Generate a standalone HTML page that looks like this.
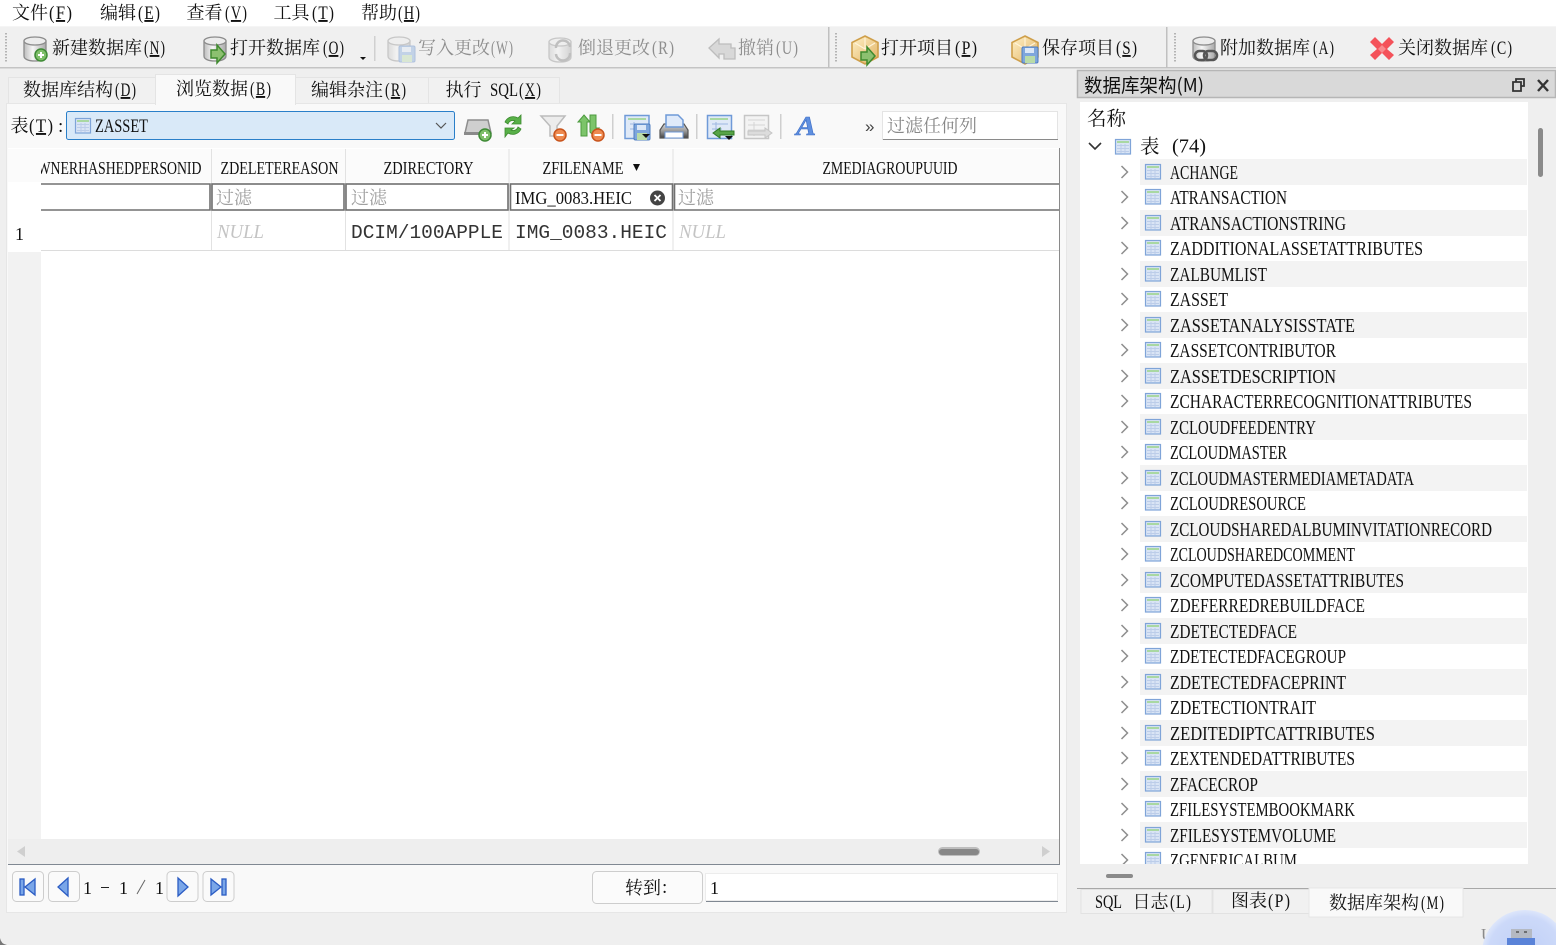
<!DOCTYPE html>
<html><head><meta charset="utf-8"><title>DB Browser</title>
<style>
html,body{margin:0;padding:0;background:#efefef;width:1556px;height:945px;overflow:hidden}
svg{display:block;position:absolute;left:0;top:0}
.c{font-family:"Noto Serif CJK SC","Liberation Serif",serif;font-size:18px;fill:#111}
.l{font-family:"Liberation Serif","Noto Serif CJK SC",serif;font-size:19px;fill:#111}
.t{font-family:"Liberation Serif",serif;font-size:20px;fill:#111}
.m{font-family:"Liberation Mono",monospace;font-size:19.5px;fill:#333}
.g{fill:#8e8e8e}
.f{fill:#a0a0a0}
.n{font-family:"Liberation Serif",serif;font-style:italic;font-size:20px;fill:#c4c4c4}
.u{text-decoration:underline}
</style></head><body>
<svg width="1556" height="945" viewBox="0 0 1556 945" xmlns="http://www.w3.org/2000/svg">
<defs>
<linearGradient id="cyl" x1="0" x2="1" y1="0" y2="0"><stop offset="0" stop-color="#bdbdbd"/><stop offset=".4" stop-color="#f6f6f6"/><stop offset="1" stop-color="#a8a8a8"/></linearGradient>
<linearGradient id="box" x1="0" x2="1" y1="0" y2="1"><stop offset="0" stop-color="#fff1c8"/><stop offset="1" stop-color="#e0b060"/></linearGradient>
<linearGradient id="prn" x1="0" x2="0" y1="0" y2="1"><stop offset="0" stop-color="#d8d8d8"/><stop offset=".5" stop-color="#9a9a9a"/><stop offset="1" stop-color="#444"/></linearGradient>
<radialGradient id="usb" gradientUnits="userSpaceOnUse" cx="1525" cy="953" r="43"><stop offset="0" stop-color="#bfcff6"/><stop offset=".85" stop-color="#ccd9f9"/><stop offset="1" stop-color="#dde6fb"/></radialGradient>
<clipPath id="treeclip"><rect x="1080" y="102" width="448" height="762"/></clipPath>
<clipPath id="hdrclip"><rect x="41" y="148" width="170" height="34"/></clipPath>

<g id="tbl">
<rect x=".5" y=".5" width="15" height="14.500" fill="#d9e4f5" stroke="#7fa4d8" stroke-width="1.200"/>
<rect x="2" y="2" width="12" height="2" fill="#a9d8a2"/>
<path d="M2 6.500H14M2 9.500H14M2 12.500H14M6 5V14M10 5V14" stroke="#bccde9" fill="none"/>
</g>
<g id="row">
<path d="M1121.500-6L1127.500 0L1121.500 6" fill="none" stroke="#8e8e8e" stroke-width="1.500"/>
<use href="#tbl" x="1145" y="-8"/>
</g>
<g id="cy">
<path d="M1 5V20C1 23 5 25 12 25C19 25 23 23 23 20V5Z" fill="url(#cyl)" stroke="#8c8c8c" stroke-width="1.300"/>
<ellipse cx="12" cy="5" rx="11" ry="4" fill="#ececec" stroke="#8c8c8c" stroke-width="1.300"/>
</g>
<g id="plus">
<circle cx="0" cy="0" r="6" fill="#7fbf6a" stroke="#3e8a35" stroke-width="1.500"/>
<path d="M-3 0H3M0-3V3" stroke="#fff" stroke-width="2"/>
</g>
<g id="minus">
<circle cx="0" cy="0" r="6" fill="#ee8a50" stroke="#c8541c" stroke-width="1.500"/>
<path d="M-3.500 0H3.500" stroke="#fff" stroke-width="2"/>
</g>
<g id="arrow">
<path d="M0-4H6V-9L14 0L6 9V4H0Z" fill="#8cc070" stroke="#3f8a2e" stroke-width="1.500"/>
</g>
<g id="hex">
<path d="M14 1L27 7.500V22L14 29L1 22V7.500Z" fill="url(#box)" stroke="#cf9f4a" stroke-width="1.600"/>
<path d="M14 3L14 14L4 8M14 14L24 8" fill="none" stroke="#fff3d8" stroke-width="1.200"/>
</g>
<g id="floppy">
<rect x="0" y="0" width="16" height="16" rx="1.500" fill="#7ea6dc" stroke="#4f7dc0"/>
<rect x="3" y="1" width="9" height="5" fill="#dbe7f7"/>
<rect x="3" y="9" width="10" height="7" fill="#b9dba8"/>
</g>
<g id="navbtn"><rect x=".5" y=".5" width="31" height="30" rx="4" fill="#fafafa" stroke="#cdcdcd"/></g>
</defs>

<!-- backgrounds -->
<rect width="1556" height="945" fill="#efefef"/>
<rect width="1556" height="26" fill="#fff"/>
<rect y="26" width="1556" height="1" fill="#f5f5f5"/>
<rect y="27" width="1556" height="40" fill="#f0f0f0"/>
<rect y="67" width="1556" height="1.500" fill="#c4c4c4"/>
<rect x="828" y="27" width="1.500" height="41" fill="#c0c0c0"/>
<rect x="1166" y="27" width="1.500" height="41" fill="#c0c0c0"/>
<path d="M6 33V63M836 33V63M1175 33V63" stroke="#b4b4b4" stroke-width="2" stroke-dasharray="1.500 1.500"/>
<rect x="374" y="36" width="1.500" height="25" fill="#d0d0d0"/>

<!-- menu -->
<text class="c" x="12" y="19">文件</text><text class="l" x="49" y="19" textLength="23" lengthAdjust="spacingAndGlyphs">(&#8202;<tspan class="u">F</tspan>&#8202;)</text>
<text class="c" x="100" y="19">编辑</text><text class="l" x="138" y="19" textLength="22" lengthAdjust="spacingAndGlyphs">(&#8202;<tspan class="u">E</tspan>&#8202;)</text>
<text class="c" x="186.500" y="19">查看</text><text class="l" x="225" y="19" textLength="22" lengthAdjust="spacingAndGlyphs">(&#8202;<tspan class="u">V</tspan>&#8202;)</text>
<text class="c" x="273.500" y="19">工具</text><text class="l" x="312" y="19" textLength="22" lengthAdjust="spacingAndGlyphs">(&#8202;<tspan class="u">T</tspan>&#8202;)</text>
<text class="c" x="361" y="19">帮助</text><text class="l" x="398" y="19" textLength="22" lengthAdjust="spacingAndGlyphs">(&#8202;<tspan class="u">H</tspan>&#8202;)</text>

<!-- toolbar icons -->
<use href="#cy" x="23" y="36"/><use href="#plus" x="41" y="55"/>
<use href="#cy" x="203" y="36"/><use href="#arrow" x="211" y="54"/>
<path d="M360 57H366L363 60Z" fill="#111"/>
<g opacity=".4"><use href="#cy" x="387" y="36"/><use href="#floppy" x="399" y="46"/></g>
<g opacity=".4"><use href="#cy" x="548" y="37"/><path d="M556 48A7 7 0 0 1 570 47M570 53A7 7 0 0 1 556 54" fill="none" stroke="#777" stroke-width="2.500"/></g>
<path d="M709 48L719 39V44H731V48H735V59H724V54H719V58Z" fill="#d8d8d8" stroke="#bdbdbd" stroke-width="1.300"/>
<use href="#hex" x="851" y="35"/><use href="#arrow" x="861" y="56"/>
<use href="#hex" x="1011" y="35"/><use href="#floppy" x="1022" y="47"/>
<use href="#cy" x="1192" y="36"/>
<g fill="none" stroke="#555" stroke-width="2.500"><rect x="1195" y="51" width="12" height="9" rx="4.500"/><rect x="1204" y="51" width="13" height="9" rx="4.500"/></g>
<path d="M1370 42L1375 37L1382 44L1389 37L1394 42L1387 49L1394 55L1389 60L1382 53L1375 60L1370 55L1377 49Z" fill="#f4525a"/>
<path d="M1382 45L1386 49L1382 53L1378 49Z" fill="#f98a8e"/>

<!-- toolbar text -->
<text class="c" x="52" y="54">新建数据库</text><text class="l" x="144" y="54" textLength="21" lengthAdjust="spacingAndGlyphs">(&#8202;<tspan class="u">N</tspan>&#8202;)</text>
<text class="c" x="230" y="54">打开数据库</text><text class="l" x="323" y="54" textLength="21" lengthAdjust="spacingAndGlyphs">(&#8202;<tspan class="u">O</tspan>&#8202;)</text>
<text class="c g" x="418" y="54">写入更改</text><text class="l g" x="491" y="54" textLength="22" lengthAdjust="spacingAndGlyphs">(&#8202;W&#8202;)</text>
<text class="c g" x="578" y="54">倒退更改</text><text class="l g" x="652" y="54" textLength="22" lengthAdjust="spacingAndGlyphs">(&#8202;R&#8202;)</text>
<text class="c g" x="738" y="54">撤销</text><text class="l g" x="776" y="54" textLength="22" lengthAdjust="spacingAndGlyphs">(&#8202;U&#8202;)</text>
<text class="c" x="881" y="54">打开项目</text><text class="l" x="955" y="54" textLength="22" lengthAdjust="spacingAndGlyphs">(&#8202;<tspan class="u">P</tspan>&#8202;)</text>
<text class="c" x="1042" y="54">保存项目</text><text class="l" x="1116" y="54" textLength="21" lengthAdjust="spacingAndGlyphs">(&#8202;<tspan class="u">S</tspan>&#8202;)</text>
<text class="c" x="1220" y="54">附加数据库</text><text class="l" x="1313" y="54" textLength="21" lengthAdjust="spacingAndGlyphs">(&#8202;A&#8202;)</text>
<text class="c" x="1398" y="54">关闭数据库</text><text class="l" x="1491" y="54" textLength="21" lengthAdjust="spacingAndGlyphs">(&#8202;C&#8202;)</text>

<!-- tabs -->
<rect x="8.500" y="77.500" width="147" height="27" fill="#f1f1f1" stroke="#e4e4e4"/>
<rect x="295.500" y="77.500" width="133" height="27" fill="#f1f1f1" stroke="#e4e4e4"/>
<rect x="428.500" y="77.500" width="131" height="27" fill="#f1f1f1" stroke="#e4e4e4"/>
<rect x="6.500" y="103.500" width="1060" height="809" fill="#f9f9f9" stroke="#e6e6e6"/>
<path d="M155.500 105V74.500H295.500V105" fill="#f9f9f9" stroke="#e4e4e4"/>
<text class="c" x="23" y="96">数据库结构</text><text class="l" x="115" y="96" textLength="21" lengthAdjust="spacingAndGlyphs">(&#8202;<tspan class="u">D</tspan>&#8202;)</text>
<text class="c" x="176" y="95">浏览数据</text><text class="l" x="250" y="95" textLength="21" lengthAdjust="spacingAndGlyphs">(&#8202;<tspan class="u">B</tspan>&#8202;)</text>
<text class="c" x="311" y="96">编辑杂注</text><text class="l" x="385" y="96" textLength="21" lengthAdjust="spacingAndGlyphs">(&#8202;<tspan class="u">R</tspan>&#8202;)</text>
<text class="c" x="445.500" y="96">执行</text><text class="l" x="490" y="96" textLength="28" lengthAdjust="spacingAndGlyphs">SQL</text><text class="l" x="519" y="96" textLength="22" lengthAdjust="spacingAndGlyphs">(&#8202;<tspan class="u">X</tspan>&#8202;)</text>

<!-- filter bar -->
<text class="c" x="10.500" y="132">表</text><text class="l" x="29" y="132" textLength="24" lengthAdjust="spacingAndGlyphs">(&#8202;<tspan class="u">T</tspan>&#8202;)</text><text class="l" x="58" y="132">:</text>
<rect x="66.500" y="111.500" width="388" height="28" rx="2" fill="#d9e9f8" stroke="#2a7fc9"/>
<use href="#tbl" x="75" y="118"/>
<text class="l" x="95" y="132" textLength="53" lengthAdjust="spacingAndGlyphs">ZASSET</text>
<path d="M436 123L441 128L446 123" fill="none" stroke="#555" stroke-width="1.200"/>

<path d="M468 120H488L491 133H465Z" fill="#cfcfcf" stroke="#8e8e8e" stroke-width="1.500"/><rect x="464" y="132" width="24" height="3" fill="#8a8a8a"/><use href="#plus" x="485" y="135"/>
<path d="M505 122A9 9 0 0 1 518 118L521 115V124H512L515 121A5 5 0 0 0 508 124ZM521 129A9 9 0 0 1 508 133L505 137V128H514L511 130A5 5 0 0 0 518 127Z" fill="#58b048" stroke="#3b8a2e" stroke-width=".8"/>
<g><path d="M541 116H565L557 126V136H550V126Z" fill="#ececec" stroke="#bcbcbc" stroke-width="1.500"/><use href="#minus" x="560" y="135"/></g>
<path d="M584 115L590 122H587V136H581V122H578Z" fill="#7cc46a" stroke="#4c9a3e"/><path d="M590 115H596V128H599L593 135L590 132Z" fill="#7cc46a" stroke="#4c9a3e"/><use href="#minus" x="598" y="135"/>
<rect x="612" y="114" width="1.500" height="25" fill="#cfcfcf"/>
<rect x="625" y="115.500" width="24" height="23" fill="#dfe9f7" stroke="#6f9ad8" stroke-width="1.500"/><rect x="628" y="118" width="18" height="2" fill="#a9d8a2"/><path d="M630 124H646M630 129H640M634 122V136" stroke="#9db7e0"/><use href="#floppy" x="634" y="124"/><path d="M642 134H650L646 138Z" fill="#111"/>
<path d="M664 124H684L688 130V138H660V130Z" fill="url(#prn)" stroke="#555" stroke-width="1.200"/><path d="M666 115H678L683 120V127H666Z" fill="#dfeafa" stroke="#6f9ad8" stroke-width="1.500"/><rect x="665" y="132" width="18" height="6" fill="#fff" stroke="#6f9ad8"/>
<rect x="696" y="114" width="1.500" height="25" fill="#cfcfcf"/>
<rect x="707.500" y="115.500" width="24" height="23" fill="#dfe9f7" stroke="#6f9ad8" stroke-width="1.500"/><rect x="710" y="118" width="18" height="2" fill="#a9d8a2"/><path d="M712 124H728M712 129H722M716 122V136" stroke="#9db7e0"/><path d="M713 133L720 128V131H734V135H720V138Z" fill="#57a347" stroke="#2f7a25"/><path d="M725 136H733L729 140Z" fill="#111"/>
<g opacity=".45"><rect x="744.500" y="115.500" width="24" height="23" fill="#ececec" stroke="#8a8a8a" stroke-width="1.500"/><path d="M748 120H765M748 125H765M748 130H765M754 122V136" stroke="#aaa"/><path d="M748 131H765V128L772 133L765 138V135H748Z" fill="#bbb" stroke="#888"/></g>
<rect x="780" y="114" width="1.500" height="25" fill="#cfcfcf"/>
<text x="796" y="135" font-family="Liberation Serif,serif" font-style="italic" font-weight="bold" font-size="27" fill="#5f8fdf" stroke="#3f70c8" stroke-width=".6" textLength="20" lengthAdjust="spacingAndGlyphs">A</text>
<text x="865" y="132" font-family="Liberation Sans,sans-serif" font-size="17" fill="#444">»</text>
<rect x="882.500" y="111.500" width="175" height="28" fill="#fff" stroke="#e4e4e4"/><rect x="883" y="139" width="175" height="1" fill="#8a8a8a"/>
<text class="c" x="887" y="132" style="fill:#888">过滤任何列</text>

<!-- table -->
<rect x="8" y="148" width="1052" height="691" fill="#fff"/>
<rect x="8" y="252" width="33" height="587" fill="#f2f2f2"/>
<rect x="8" y="149" width="1052" height="33" fill="#fbfbfb"/>
<path d="M211.500 149V250M345.500 149V250M509 149V250M673 149V250" stroke="#e2e2e2"/>
<rect x="1059" y="148" width="1" height="716" fill="#8a8a8a"/>
<g fill="#fff" stroke="#707070" stroke-width="1.600">
<path d="M41 184H210V210H41" />
<rect x="212" y="184" width="132" height="26"/>
<rect x="346" y="184" width="162" height="26"/>
<rect x="510.500" y="184" width="162" height="26"/>
<path d="M1059 184H674.500V210H1059"/>
</g>
<rect x="41" y="250" width="1018" height="1" fill="#dcdcdc"/>
<text class="t" clip-path="url(#hdrclip)" x="37.500" y="174" style="font-size:18px" textLength="164" lengthAdjust="spacingAndGlyphs">WNERHASHEDPERSONID</text>
<text class="t" x="220.500" y="174" style="font-size:18px" textLength="118" lengthAdjust="spacingAndGlyphs">ZDELETEREASON</text>
<text class="t" x="383.500" y="174" style="font-size:18px" textLength="90" lengthAdjust="spacingAndGlyphs">ZDIRECTORY</text>
<text class="t" x="542.500" y="174" style="font-size:18px" textLength="81" lengthAdjust="spacingAndGlyphs">ZFILENAME</text>
<path d="M633 164H640L636.500 171Z" fill="#111"/>
<text class="t" x="822.500" y="174" style="font-size:18px" textLength="135" lengthAdjust="spacingAndGlyphs">ZMEDIAGROUPUUID</text>
<text class="c f" x="216" y="204">过滤</text><text class="c f" x="351" y="204">过滤</text><text class="c f" x="678" y="204">过滤</text>
<text class="t" x="515" y="204" style="font-size:18px" textLength="117" lengthAdjust="spacingAndGlyphs">IMG_0083.HEIC</text>
<circle cx="657.500" cy="198" r="7.500" fill="#444"/><path d="M654.500 195L660.500 201M660.500 195L654.500 201" stroke="#fff" stroke-width="1.800"/>
<text class="n" x="217" y="238" textLength="47" lengthAdjust="spacingAndGlyphs">NULL</text>
<text class="m" x="351" y="238" textLength="152" lengthAdjust="spacingAndGlyphs">DCIM/100APPLE</text>
<text class="m" x="515" y="238" textLength="152" lengthAdjust="spacingAndGlyphs">IMG_0083.HEIC</text>
<text class="n" x="679" y="238" textLength="47" lengthAdjust="spacingAndGlyphs">NULL</text>
<text class="l" x="15" y="240" style="font-size:18px">1</text>

<!-- h scrollbar -->
<rect x="8" y="839" width="1051" height="25" fill="#eeeeee"/>
<path d="M25 846V857L17 851.500Z" fill="#cfcfcf"/><path d="M1042 846V857L1050 851.500Z" fill="#cfcfcf"/>
<rect x="938" y="847" width="42" height="9" rx="4.500" fill="#bdbdbd"/><rect x="939" y="849" width="40" height="6" rx="3" fill="#878787"/>
<rect x="8" y="864" width="1052" height="1" fill="#808892"/>

<!-- nav -->
<use href="#navbtn" x="12" y="871"/><use href="#navbtn" x="48" y="871"/><use href="#navbtn" x="166.500" y="871"/><use href="#navbtn" x="202.500" y="871"/>
<g fill="#7aa6e8" stroke="#2b5cc4" stroke-width="1.300">
<rect x="20" y="879" width="4" height="16"/><path d="M35 879V895L25 887Z"/>
<path d="M68 878V896L58 887Z"/>
<path d="M178 878V896L188 887Z"/>
<path d="M211 879V895L221 887Z"/><rect x="222" y="879" width="4" height="16"/>
</g>
<text class="l" x="83" y="894" style="font-size:18px">1</text><rect x="101" y="887" width="8" height="1" fill="#222"/>
<text class="l" x="119" y="894" style="font-size:18px">1</text><path d="M137 894L145 880" stroke="#666"/>
<text class="l" x="155" y="894" style="font-size:18px">1</text>
<rect x="592.500" y="871.500" width="110" height="32" rx="4" fill="#fbfbfb" stroke="#cdcdcd"/>
<text class="c" x="625" y="894">转到</text><text class="l" x="662" y="893">:</text>
<rect x="705.500" y="873.500" width="352" height="27" fill="#fff" stroke="#ececec"/><rect x="706" y="901" width="352" height="1" fill="#808892"/>
<text class="l" x="710" y="894" style="font-size:18px">1</text>

<!-- dock -->
<rect x="1077.500" y="70.500" width="478" height="27" fill="#d9d9d9" stroke="#b6b6b6" stroke-width="1.500"/>
<text x="1084" y="92" font-family="Noto Sans CJK SC,Liberation Sans,sans-serif" font-size="19" fill="#111" textLength="120" lengthAdjust="spacingAndGlyphs">数据库架构(M)</text>
<path d="M1516 82V79H1524V86H1521M1513 82H1521V91H1513Z" fill="none" stroke="#333" stroke-width="1.800"/>
<path d="M1538 80L1548 91M1548 80L1538 91" stroke="#333" stroke-width="2.400"/>
<rect x="1080" y="102" width="448" height="762" fill="#fff"/>
<text class="c" x="1087" y="125" style="font-size:19.500px">名称</text>
<path d="M1089 143L1095 149L1101 143" fill="none" stroke="#333" stroke-width="1.600"/>
<use href="#tbl" x="1115" y="139"/>
<text class="c" x="1140" y="153" style="font-size:19.500px">表</text>
<text class="t" x="1172" y="152.500" textLength="34" lengthAdjust="spacingAndGlyphs">(74)</text>
<rect x="1538" y="128" width="5" height="49" rx="2.500" fill="#8a8a8a"/>

<g clip-path="url(#treeclip)">
<g fill="#f3f3f3">
<rect x="1140" y="159" width="387" height="26"/><rect x="1140" y="210" width="387" height="26"/><rect x="1140" y="261" width="387" height="26"/><rect x="1140" y="312" width="387" height="26"/><rect x="1140" y="363" width="387" height="26"/><rect x="1140" y="414" width="387" height="26"/><rect x="1140" y="465" width="387" height="26"/><rect x="1140" y="516" width="387" height="26"/><rect x="1140" y="567" width="387" height="26"/><rect x="1140" y="618" width="387" height="26"/><rect x="1140" y="669" width="387" height="26"/><rect x="1140" y="720" width="387" height="26"/><rect x="1140" y="771" width="387" height="26"/><rect x="1140" y="822" width="387" height="26"/>
</g>
<use href="#row" y="172"/><use href="#row" y="197"/><use href="#row" y="223"/><use href="#row" y="248"/><use href="#row" y="274"/><use href="#row" y="299"/><use href="#row" y="325"/><use href="#row" y="350"/><use href="#row" y="376"/><use href="#row" y="401"/><use href="#row" y="427"/><use href="#row" y="452"/><use href="#row" y="478"/><use href="#row" y="503"/><use href="#row" y="529"/><use href="#row" y="554"/><use href="#row" y="580"/><use href="#row" y="605"/><use href="#row" y="631"/><use href="#row" y="656"/><use href="#row" y="682"/><use href="#row" y="707"/><use href="#row" y="733"/><use href="#row" y="758"/><use href="#row" y="784"/><use href="#row" y="809"/><use href="#row" y="835"/><use href="#row" y="860"/>
<g class="t">
<text class="t" x="1170" y="179" textLength="68" lengthAdjust="spacingAndGlyphs">ACHANGE</text>
<text class="t" x="1170" y="204" textLength="117" lengthAdjust="spacingAndGlyphs">ATRANSACTION</text>
<text class="t" x="1170" y="230" textLength="176" lengthAdjust="spacingAndGlyphs">ATRANSACTIONSTRING</text>
<text class="t" x="1170" y="255" textLength="253" lengthAdjust="spacingAndGlyphs">ZADDITIONALASSETATTRIBUTES</text>
<text class="t" x="1170" y="281" textLength="97" lengthAdjust="spacingAndGlyphs">ZALBUMLIST</text>
<text class="t" x="1170" y="306" textLength="58" lengthAdjust="spacingAndGlyphs">ZASSET</text>
<text class="t" x="1170" y="332" textLength="185" lengthAdjust="spacingAndGlyphs">ZASSETANALYSISSTATE</text>
<text class="t" x="1170" y="357" textLength="166" lengthAdjust="spacingAndGlyphs">ZASSETCONTRIBUTOR</text>
<text class="t" x="1170" y="383" textLength="166" lengthAdjust="spacingAndGlyphs">ZASSETDESCRIPTION</text>
<text class="t" x="1170" y="408" textLength="302" lengthAdjust="spacingAndGlyphs">ZCHARACTERRECOGNITIONATTRIBUTES</text>
<text class="t" x="1170" y="434" textLength="146" lengthAdjust="spacingAndGlyphs">ZCLOUDFEEDENTRY</text>
<text class="t" x="1170" y="459" textLength="117" lengthAdjust="spacingAndGlyphs">ZCLOUDMASTER</text>
<text class="t" x="1170" y="485" textLength="244" lengthAdjust="spacingAndGlyphs">ZCLOUDMASTERMEDIAMETADATA</text>
<text class="t" x="1170" y="510" textLength="136" lengthAdjust="spacingAndGlyphs">ZCLOUDRESOURCE</text>
<text class="t" x="1170" y="536" textLength="322" lengthAdjust="spacingAndGlyphs">ZCLOUDSHAREDALBUMINVITATIONRECORD</text>
<text class="t" x="1170" y="561" textLength="185" lengthAdjust="spacingAndGlyphs">ZCLOUDSHAREDCOMMENT</text>
<text class="t" x="1170" y="587" textLength="234" lengthAdjust="spacingAndGlyphs">ZCOMPUTEDASSETATTRIBUTES</text>
<text class="t" x="1170" y="612" textLength="195" lengthAdjust="spacingAndGlyphs">ZDEFERREDREBUILDFACE</text>
<text class="t" x="1170" y="638" textLength="127" lengthAdjust="spacingAndGlyphs">ZDETECTEDFACE</text>
<text class="t" x="1170" y="663" textLength="176" lengthAdjust="spacingAndGlyphs">ZDETECTEDFACEGROUP</text>
<text class="t" x="1170" y="689" textLength="176" lengthAdjust="spacingAndGlyphs">ZDETECTEDFACEPRINT</text>
<text class="t" x="1170" y="714" textLength="146" lengthAdjust="spacingAndGlyphs">ZDETECTIONTRAIT</text>
<text class="t" x="1170" y="740" textLength="205" lengthAdjust="spacingAndGlyphs">ZEDITEDIPTCATTRIBUTES</text>
<text class="t" x="1170" y="765" textLength="185" lengthAdjust="spacingAndGlyphs">ZEXTENDEDATTRIBUTES</text>
<text class="t" x="1170" y="791" textLength="88" lengthAdjust="spacingAndGlyphs">ZFACECROP</text>
<text class="t" x="1170" y="816" textLength="185" lengthAdjust="spacingAndGlyphs">ZFILESYSTEMBOOKMARK</text>
<text class="t" x="1170" y="842" textLength="166" lengthAdjust="spacingAndGlyphs">ZFILESYSTEMVOLUME</text>
<text class="t" x="1170" y="867" textLength="127" lengthAdjust="spacingAndGlyphs">ZGENERICALBUM</text>
</g>
</g>
<rect x="1106" y="874" width="27" height="4" rx="2" fill="#8a8a8a"/>

<!-- bottom tabs -->
<rect x="1077" y="888" width="479" height="1" fill="#a8a8a8"/>
<rect x="1081" y="889.500" width="131" height="24" fill="#f1f1f1" stroke="#e2e2e2"/>
<rect x="1213" y="889.500" width="96" height="24" fill="#f1f1f1" stroke="#e2e2e2"/>
<rect x="1309" y="888" width="154" height="29" fill="#f9f9f9" stroke="#e6e6e6"/>
<text class="l" x="1095" y="908" textLength="27" lengthAdjust="spacingAndGlyphs">SQL</text><text class="c" x="1132.500" y="908">日志</text><text class="l" x="1170" y="908" textLength="21" lengthAdjust="spacingAndGlyphs">(&#8202;L&#8202;)</text>
<text class="c" x="1231" y="907">图表</text><text class="l" x="1268" y="907" textLength="22" lengthAdjust="spacingAndGlyphs">(&#8202;P&#8202;)</text>
<text class="c" x="1329" y="909">数据库架构</text><text class="l" x="1421" y="909" textLength="23" lengthAdjust="spacingAndGlyphs">(&#8202;M&#8202;)</text>

<!-- floating usb -->
<text x="1481" y="940" font-family="Liberation Serif,serif" font-size="17" fill="#8a8a8a">U</text>
<path d="M1482.750 945A43 43 0 0 1 1556 923.200V945Z" fill="url(#usb)"/>
<rect x="1511" y="929" width="21" height="9" fill="#b4b9c2"/><rect x="1507" y="938" width="28" height="7" fill="#5a83d8"/>
<path d="M1516 932H1519M1524 932H1527" stroke="#555" stroke-width="1.500"/>
<path d="M0 938Q1 944 7 945H0Z" fill="#777"/>
</svg>
</body></html>
